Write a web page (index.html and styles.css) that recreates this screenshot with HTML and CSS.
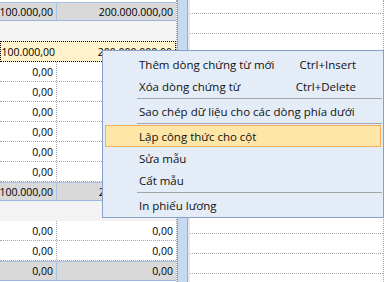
FILE: index.html
```html
<!DOCTYPE html>
<html lang="vi">
<head>
  <meta charset="UTF-8">
  <meta name="viewport" content="width=device-width, initial-scale=1.0">
  <title>Bảng lương</title>
  <link rel="stylesheet" href="styles.css">
</head>
<body>
  <div class="screen">
    <div class="grid">
      <div class="row top"></div>
      <div class="row total">
        <div class="cell c1">100.000,00</div>
        <div class="cell c2">200.000.000,00</div>
      </div>
      <div class="row band"></div>
      <div class="row data focus">
        <div class="cell c1">100.000,00</div>
        <div class="cell c2">200.000.000,00</div>
      </div>
      <div class="row data"><div class="cell c1">0,00</div><div class="cell c2"></div></div>
      <div class="row data"><div class="cell c1">0,00</div><div class="cell c2"></div></div>
      <div class="row data"><div class="cell c1">0,00</div><div class="cell c2"></div></div>
      <div class="row data"><div class="cell c1">0,00</div><div class="cell c2"></div></div>
      <div class="row data"><div class="cell c1">0,00</div><div class="cell c2"></div></div>
      <div class="row data"><div class="cell c1">0,00</div><div class="cell c2"></div></div>
      <div class="row total">
        <div class="cell c1">100.000,00</div>
        <div class="cell c2">200.000.000,00</div>
      </div>
      <div class="row band"></div>
      <div class="row data"><div class="cell c1">0,00</div><div class="cell c2">0,00</div></div>
      <div class="row data"><div class="cell c1">0,00</div><div class="cell c2">0,00</div></div>
      <div class="row total last">
        <div class="cell c1">0,00</div>
        <div class="cell c2">0,00</div>
      </div>
    </div>

    <div class="splitter"></div>

    <div class="side-grid">
      <div class="line first"></div>
      <div class="line"></div>
      <div class="line"></div>
      <div class="line"></div>
      <div class="line"></div>
      <div class="line"></div>
      <div class="line"></div>
      <div class="line"></div>
      <div class="line"></div>
      <div class="line"></div>
      <div class="line"></div>
      <div class="line"></div>
      <div class="line"></div>
      <div class="line"></div>
    </div>

    <ul class="menu">
      <li class="item"><span>Thêm dòng chứng từ mới</span><span class="key">Ctrl+Insert</span></li>
      <li class="item"><span>Xóa dòng chứng từ</span><span class="key">Ctrl+Delete</span></li>
      <li class="sep"></li>
      <li class="item"><span>Sao chép dữ liệu cho các dòng phía dưới</span></li>
      <li class="sep"></li>
      <li class="item active"><span>Lập công thức cho cột</span></li>
      <li class="item"><span>Sửa mẫu</span></li>
      <li class="item"><span>Cất mẫu</span></li>
      <li class="sep"></li>
      <li class="item"><span>In phiếu lương</span></li>
    </ul>
  </div>
</body>
</html>
```

FILE: styles.css
```css
html, body {
  margin: 0;
  padding: 0;
  background: #ffffff;
}
.screen {
  position: relative;
  display: flex;
  width: 385px;
  height: 282px;
  overflow: hidden;
  font-family: "Open Sans", "Liberation Sans", sans-serif;
  color: #000000;
}

/* main grid */
.grid {
  width: 176px;
  flex: none;
  display: flex;
  flex-direction: column;
  border-right: 1px dotted #a8a8a8;
}
.row {
  display: flex;
  flex: none;
}
.row.top {
  height: 2px;
}
.cell {
  box-sizing: border-box;
  display: flex;
  align-items: center;
  justify-content: flex-end;
  font-size: 10.5px;
  padding-right: 3px;
  white-space: nowrap;
  overflow: hidden;
}
.c1 {
  width: 57px;
}
.c2 {
  flex: 1;
}
.row.total {
  height: 19px;
  box-sizing: border-box;
  background: #d9d9d9;
  border-top: 1px solid #a9c2e4;
  border-bottom: 1px solid #9ab6de;
}
.row.total .c1 {
  border-right: 1px solid #a9c2e4;
}
.row.total.last {
  height: 20px;
}
.row.band {
  height: 20px;
  background: #f3f3f3;
}
.row.data {
  height: 20px;
  box-sizing: border-box;
  border-bottom: 1px dotted #a8a8a8;
}
.row.data .c1 {
  border-right: 1px dotted #a8a8a8;
}
.row.focus {
  height: 21px;
  background: #fff3cd;
  border: 1px dotted #000000;
}
.row.focus .c1 {
  border-right: none;
}

/* splitter between grids */
.splitter {
  width: 9px;
  flex: none;
  background: #c6d9f1;
  border-left: 1px solid #8eaedb;
  border-right: 1px solid #8eaedb;
}

/* right grid */
.side-grid {
  flex: 1;
  display: flex;
  flex-direction: column;
  border-left: 2px solid #e8e8e8;
  border-right: 1px dotted #a8a8a8;
  margin-right: 1px;
}
.line {
  flex: none;
  height: 20px;
  box-sizing: border-box;
  border-bottom: 1px dotted #a8a8a8;
}
.line.first {
  height: 14px;
}

/* context menu */
.menu {
  position: absolute;
  left: 102px;
  top: 50px;
  width: 282px;
  box-sizing: border-box;
  margin: 0;
  padding: 2px 1px 1px 1px;
  list-style: none;
  background: #e4ecf7;
  border: 1px solid #869fcb;
  font-size: 11.5px;
  color: #111111;
}
.item {
  display: flex;
  justify-content: space-between;
  align-items: center;
  height: 22px;
  box-sizing: border-box;
  padding: 0 24px 0 33px;
  margin: 0 1px;
  border: 1px solid transparent;
}
.item.active {
  background: #fee6a7;
  border-color: #f4ad5a;
}
.sep {
  height: 1px;
  margin: 1px 0 1px 33px;
  background: #a6a6a6;
}
```
